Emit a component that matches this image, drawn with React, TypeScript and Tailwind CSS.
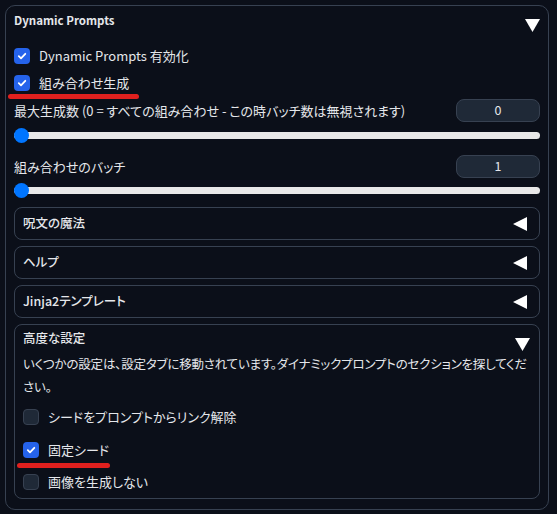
import React from "react";

const font = "font-['Noto_Sans_CJK_JP','Noto_Sans',sans-serif] [font-feature-settings:'palt']";

const Down = () => (
  <svg width="15" height="13" viewBox="0 0 15 13" className="block">
    <polygon points="0,0 15,0 7.5,13" fill="#ffffff" />
  </svg>
);

const Left = () => (
  <svg width="14" height="14" viewBox="0 0 14 14" className="block">
    <polygon points="14,0 14,14 0,7" fill="#ffffff" />
  </svg>
);

const Checkbox = ({ checked, label }: { checked: boolean; label: string }) => (
  <div className="flex items-center h-4">
    {checked ? (
      <span className="w-4 h-4 rounded-[4px] bg-[#2563eb] flex items-center justify-center">
        <svg width="10" height="10" viewBox="0 0 10 10">
          <path d="M1.8 5.2 L4 7.3 L8.3 2.8" stroke="#fff" strokeWidth="1.8" fill="none" strokeLinecap="round" strokeLinejoin="round" />
        </svg>
      </span>
    ) : (
      <span className="w-4 h-4 rounded-[4px] bg-[#1f2937] border border-[#374151]" />
    )}
    <span className="ml-[9px] text-[13px] leading-5 text-[#e5e7eb]">{label}</span>
  </div>
);

const NumberRow = ({ label, value }: { label: string; value: string }) => (
  <div className="flex items-center justify-between h-[23px]">
    <span className="text-[13px] text-[#e5e7eb] whitespace-nowrap">{label}</span>
    <div className="w-[84px] h-[23px] rounded-[8px] bg-[#1f2937] border border-[#374151] flex items-center justify-center text-[12.5px] text-[#e5e7eb]">
      {value}
    </div>
  </div>
);

const Slider = () => (
  <div className="relative h-[14px] flex items-center">
    <div className="w-full h-[7px] rounded-full bg-[#e8e8e8]" />
    <div className="absolute left-0 -top-[0.5px] w-[15px] h-[15px] rounded-full bg-[#0075ff]" />
  </div>
);

const Accordion = ({ title }: { title: string }) => (
  <div className="h-[33px] rounded-[8px] border border-[#374151] flex items-center justify-between pl-2 pr-[12px]">
    <span className="text-[12.5px] font-medium text-[#e5e7eb]">{title}</span>
    <Left />
  </div>
);

export default function App() {
  return (
    <div className={`relative w-[557px] h-[514px] bg-[#0b0f19] pt-[5px] pl-[5px] ${font}`}>
      <div className="w-[544px] h-[505px] rounded-[10px] border border-[#374151] px-2">
        <div className="h-[30px] flex items-center justify-between">
          <span className="text-[11.5px] font-semibold text-[#e5e7eb]">Dynamic Prompts</span>
          <span className="mt-[8px]"><Down /></span>
        </div>

        <div className="mt-[12px] flex flex-col gap-[11px]">
          <Checkbox checked label="Dynamic Prompts 有効化" />
          <Checkbox checked label="組み合わせ生成" />
        </div>

        <div className="mt-[8px]">
          <NumberRow label="最大生成数 (0 = すべての組み合わせ - この時バッチ数は無視されます)" value="0" />
        </div>
        <div className="mt-[6px]">
          <Slider />
        </div>
        <div className="mt-[13px]">
          <NumberRow label="組み合わせのバッチ" value="1" />
        </div>
        <div className="mt-[5px]">
          <Slider />
        </div>

        <div className="mt-[10px] flex flex-col gap-[6px]">
          <Accordion title="呪文の魔法" />
          <Accordion title="ヘルプ" />
          <Accordion title="Jinja2テンプレート" />

          <div className="h-[175px] rounded-[8px] border border-[#374151] pl-2 pr-[9px] pb-2">
            <div className="h-[27px] flex items-center justify-between">
              <span className="text-[12.5px] font-medium text-[#e5e7eb]">高度な設定</span>
              <span className="mt-[12px]"><Down /></span>
            </div>
            <p className="text-[12.5px] leading-[23px] text-[#e5e7eb] whitespace-nowrap tracking-[-0.2px]">
              いくつかの設定は、設定タブに移動されています。ダイナミックプロンプトのセクションを探してくだ
              <br />
              さい。
            </p>
            <div className="mt-[11px]">
              <Checkbox checked={false} label="シードをプロンプトからリンク解除" />
            </div>
            <div className="mt-[17px]">
              <Checkbox checked label="固定シード" />
            </div>
            <div className="mt-[16px]">
              <Checkbox checked={false} label="画像を生成しない" />
            </div>
          </div>
        </div>
      </div>

      <div className="absolute left-[8px] top-[94px] w-[131px] h-[5px] rounded-full bg-[#e0201e]" />
      <div className="absolute left-[17px] top-[463px] w-[93px] h-[5px] rounded-full bg-[#e0201e]" />
    </div>
  );
}
